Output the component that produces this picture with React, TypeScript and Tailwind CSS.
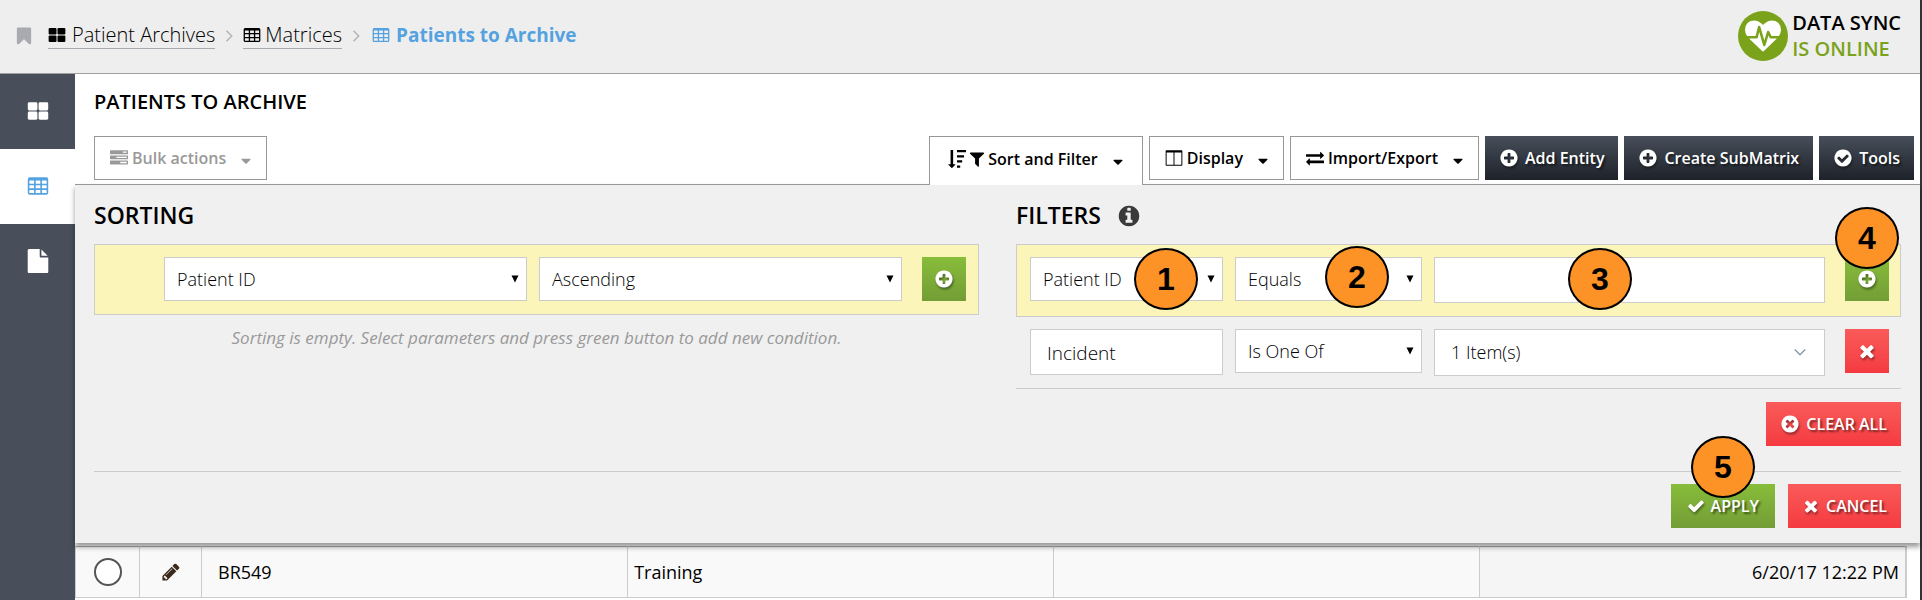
import React, { useState } from "react";

type IconProps = { className?: string };

const disc =
  "q0 209-103 385.5t-279.5 279.5-385.5 103-385.5-103-279.5-279.5-103-385.5 103-385.5 279.5-279.5 385.5-103 385.5 103 279.5 279.5 103 385.5z";

const shapes = {
  plusCircle:
    "M1344 960v-128q0-26-19-45t-45-19h-256v-256q0-26-19-45t-45-19h-128q-26 0-45 19t-19 45v256h-256q-26 0-45 19t-19 45v128q0 26 19 45t45 19h256v256q0 26 19 45t45 19h128q26 0 45-19t19-45v-256h256q26 0 45-19t19-45zm320-64" + disc,
  timesCircle:
    "M1277 1122q0-26-19-45l-181-181 181-181q19-19 19-45 0-27-19-46l-90-90q-19-19-46-19-26 0-45 19l-181 181-181-181q-19-19-45-19-27 0-46 19l-90 90q-19 19-19 46 0 26 19 45l181 181-181 181q-19 19-19 45 0 27 19 46l90 90q19 19 46 19 26 0 45-19l181-181 181 181q19 19 45 19 27 0 46-19l90-90q19-19 19-46zm387-226" + disc,
  checkCircle:
    "M1412 734q0-28-18-46l-91-90q-19-19-45-19t-45 19l-408 407-226-226q-19-19-45-19t-45 19l-91 90q-18 18-18 46 0 27 18 45l362 362q19 19 45 19 27 0 46-19l543-543q18-18 18-45zm252 162" + disc,
  infoCircle:
    "M1152 1376v-160q0-14-9-23t-23-9h-96v-512q0-14-9-23t-23-9h-320q-14 0-23 9t-9 23v160q0 14 9 23t23 9h96v320h-96q-14 0-23 9t-9 23v160q0 14 9 23t23 9h448q14 0 23-9t9-23zm-128-896v-160q0-14-9-23t-23-9h-192q-14 0-23 9t-9 23v160q0 14 9 23t23 9h192q14 0 23-9t9-23zm640 416" + disc,
  heartbeat:
    "M1280 1024h305q-5 6-10 10.5t-9 7.5l-3 4-623 600q-18 18-44 18t-44-18l-624-602q-5-2-21-20h369q22 0 39.5-13.5t22.5-34.5l70-281 190 667q6 20 23 33t39 13q21 0 38-13t23-33l146-485 56 112q18 35 57 35zm512-428q0 145-103 300h-369l-111-221q-8-17-25.5-27t-36.5-8q-45 5-56 46l-129 430-196-686q-6-20-23.5-33t-39.5-13-39 13.5-22 34.5l-116 464h-423q-103-155-103-300 0-220 127-344t351-124q62 0 126.5 21.5t120 58 95.5 68.5 76 68q36-36 76-68t95.5-68.5 120-58 126.5-21.5q224 0 351 124t127 344z",
  times:
    "M1490 1322q0 40-28 68l-136 136q-28 28-68 28t-68-28l-294-294-294 294q-28 28-68 28t-68-28l-136-136q-28-28-28-68t28-68l294-294-294-294q-28-28-28-68t28-68l136-136q28-28 68-28t68 28l294 294 294-294q28-28 68-28t68 28l136 136q28 28 28 68t-28 68l-294 294 294 294q28 28 28 68z",
  check:
    "M1671 566q0 40-28 68l-724 724-136 136q-28 28-68 28t-68-28l-136-136-362-362q-28-28-28-68t28-68l136-136q28-28 68-28t68 28l294 295 656-657q28-28 68-28t68 28l136 136q28 28 28 68z",
  bookmark:
    "M1420 128q23 0 44 9 33 13 52.5 41t19.5 62v1289q0 34-19.5 62t-52.5 41q-19 8-44 8-48 0-83-32l-441-424-441 424q-36 33-83 33-23 0-44-9-33-13-52.5-41t-19.5-62v-1289q0-34 19.5-62t52.5-41q21-9 44-9h1048z",
  filter:
    "M1595 295q17 41-14 70l-493 493v742q0 42-39 59-13 5-25 5-27 0-45-19l-256-256q-19-19-19-45v-486l-493-493q-31-29-14-70 17-39 59-39h1280q42 0 59 39z",
  sort:
    "M736 1440q0 12-10 24l-319 319q-10 9-23 9-12 0-23-9l-320-320q-15-16-7-35 8-20 30-20h192v-1376q0-14 9-23t23-9h192q14 0 23 9t9 23v1376h192q14 0 23 9t9 23zM896 0h896v224h-896zM896 512h704v224h-704zM896 1024h512v224h-512zM896 1536h320v224h-320z",
  exchange:
    "M1792 1184v192q0 13-9.5 22.5t-22.5 9.5h-1376v192q0 13-9.5 22.5t-22.5 9.5q-12 0-24-10l-319-320q-9-9-9-22 0-14 9-23l320-320q9-9 23-9 13 0 22.5 9.5t9.5 22.5v192h1376q13 0 22.5 9.5t9.5 22.5zm0-544q0 14-9 23l-320 320q-9 9-23 9-13 0-22.5-9.5t-9.5-22.5v-192h-1376q-13 0-22.5-9.5t-9.5-22.5v-192q0-13 9.5-22.5t22.5-9.5h1376v-192q0-14 9-23t23-9q12 0 24 10l319 319q9 9 9 23z",
  pencil:
    "M491 1536l91-91-235-235-91 91v107h128v128h107zm523-928q0-22-22-22-10 0-17 7l-542 542q-7 7-7 17 0 22 22 22 10 0 17-7l542-542q7-7 7-17zm-54-192l416 416-832 832h-416v-416zm683 96q0 53-37 90l-166 166-416-416 166-165q36-38 90-38 53 0 91 38l235 234q37 39 37 91z",
  file:
    "M1152 512v-472q22 14 36 28l408 408q14 14 28 36h-472zm-128 32q0 40 28 68t68 28h544v1056q0 40-28 68t-68 28h-1344q-40 0-68-28t-28-68v-1600q0-40 28-68t68-28h800v544z",
  tasks:
    "M1024 1408h640v-128h-640v128zm-384-512h1024v-128h-1024v128zm640-512h384v-128h-384v128zm512 832v256q0 26-19 45t-45 19h-1664q-26 0-45-19t-19-45v-256q0-26 19-45t45-19h1664q26 0 45 19t19 45zm0-512v256q0 26-19 45t-45 19h-1664q-26 0-45-19t-19-45v-256q0-26 19-45t45-19h1664q26 0 45 19t19 45zm0-512v256q0 26-19 45t-45 19h-1664q-26 0-45-19t-19-45v-256q0-26 19-45t45-19h1664q26 0 45 19t19 45z",
  columns:
    "M160 1568h688v-1216h-688zM944 1568h688v-1216h-688zM1728 208v1376q0 80-80 80h-1504q-80 0-80-80v-1376q0-80 80-80h1504q80 0 80 80z",
  caret:
    "M1408 704q0 26-19 45l-448 448q-19 19-45 19t-45-19l-448-448q-19-19-19-45t19-45 45-19h896q26 0 45 19t19 45z",
};

function Icon({ name, className = "size-5" }: IconProps & { name: keyof typeof shapes }) {
  return (
    <svg
      viewBox="0 0 1792 1792"
      fill="currentColor"
      fillRule={name === "columns" ? "evenodd" : "nonzero"}
      aria-hidden="true"
      className={`shrink-0 ${className}`}
    >
      <path d={shapes[name]} />
    </svg>
  );
}

function GridIcon({ className = "size-5" }: IconProps) {
  return (
    <svg viewBox="0 -64 1792 1792" fill="currentColor" aria-hidden="true" className={`shrink-0 ${className}`}>
      {[64, 944].map((x) =>
        [128, 880].map((y) => <rect key={`${x}-${y}`} x={x} y={y} width="784" height="656" rx="110" />),
      )}
    </svg>
  );
}

function TableIcon({ className = "size-5" }: IconProps) {
  const cell = (x: number, y: number) =>
    `M${x + 32} ${y}h320q32 0 32 32v192q0 32-32 32h-320q-32 0-32-32v-192q0-32 32-32z`;
  const cells = [192, 704, 1216].flatMap((x) => [384, 768, 1152].map((y) => cell(x, y))).join("");
  return (
    <svg viewBox="0 -64 1792 1792" fill="currentColor" fillRule="evenodd" aria-hidden="true" className={`shrink-0 ${className}`}>
      <path d={`M224 128h1344q160 0 160 160v1088q0 160-160 160h-1344q-160 0-160-160v-1088q0-160 160-160z${cells}`} />
    </svg>
  );
}

function Chevron({ className = "" }: IconProps) {
  return (
    <svg viewBox="0 0 12 12" fill="none" stroke="currentColor" strokeWidth="1.5" aria-hidden="true" className={`size-3 shrink-0 ${className}`}>
      <path d="M3.5 0.8 8.7 6 3.5 11.2" />
    </svg>
  );
}

function Select({ label, value, options, className = "" }: { label: string; value: string; options: string[]; className?: string }) {
  const [current, setCurrent] = useState(value);
  return (
    <div className={`relative min-w-0 ${className}`}>
      <select
        aria-label={label}
        value={current}
        onChange={(e) => setCurrent(e.target.value)}
        className="block h-11 w-full appearance-none border border-[#ccc] bg-white pr-8 pl-3 text-lg font-light text-black"
      >
        {options.map((o) => (
          <option key={o}>{o}</option>
        ))}
      </select>
      <svg viewBox="0 0 8 8" aria-hidden="true" className="pointer-events-none absolute top-[18px] right-2 size-2">
        <path d="M0.5 0.5h7L4 7.5z" />
      </svg>
    </div>
  );
}

function Marker({ n, className }: { n: number; className: string }) {
  return (
    <span
      className={`pointer-events-none absolute z-20 flex h-[62px] w-16 items-center justify-center rounded-[50%] border-2 border-black bg-[#fd9226] font-['Liberation_Sans',sans-serif] text-[32px] leading-none font-bold text-black ${className}`}
    >
      {n}
    </span>
  );
}

const outline = "flex items-center border border-[#979797] bg-white text-base font-semibold";
const menu = `${outline} h-11 gap-1 pr-3 pl-[15px]`;
const shadowed = "flex h-11 items-center justify-center gap-1.5 text-base font-semibold text-white [&>span]:[text-shadow:2px_2px_2px_rgba(0,0,0,0.5)] [&>svg]:drop-shadow-[1px_2px_1px_rgba(0,0,0,0.4)]";
const dark = `${shadowed} bg-linear-to-b from-[#474f5a] to-[#1e222a] px-3.5`;
const green = `${shadowed} bg-linear-to-b from-[#88bd3a] to-[#739d36]`;
const red = `${shadowed} bg-linear-to-b from-[#fa5a5a] to-[#f43a40]`;

function Header() {
  return (
    <header className="flex h-[74px] items-center justify-between border-b border-[#a0a0a0] bg-[#eee] pr-[19px] pb-0.5 pl-3.5">
      <nav aria-label="Breadcrumb" className="flex items-center text-[20px] leading-[26px] font-light text-black">
        <button aria-label="Bookmark" className="mr-3.5 text-[#a8aaaf]">
          <Icon name="bookmark" />
        </button>
        <a href="#archives" className="flex items-center gap-1.5 border-b border-[#a8aaaf]">
          <GridIcon className="size-[18px]" />
          Patient Archives
        </a>
        <Chevron className="mx-2 text-[#b5b5b5]" />
        <a href="#matrices" className="flex items-center gap-1 border-b border-[#a8aaaf]">
          <TableIcon className="size-[18px]" />
          Matrices
        </a>
        <Chevron className="mx-2 text-[#b5b5b5]" />
        <a
          href="#patients"
          aria-current="page"
          className="ml-0.5 flex items-center gap-1.5 border-b border-transparent text-[19px] font-bold text-[#54a2df]"
        >
          <TableIcon className="size-[18px]" />
          Patients to Archive
        </a>
      </nav>
      <div className="flex items-center gap-1">
        <span className="flex size-[50px] items-center justify-center rounded-full bg-[#7aa31b] text-white">
          <Icon name="heartbeat" className="size-9" />
        </span>
        <p className="text-[20px] leading-[26px] font-semibold text-black">
          DATA SYNC
          <br />
          <span className="text-[#7aa31b]">IS ONLINE</span>
        </p>
      </div>
    </header>
  );
}

function Sidebar() {
  const item = "flex h-[75px] items-center justify-center pb-0.5";
  return (
    <nav aria-label="Sections" className="w-[75px] shrink-0 bg-[#484f5a] text-white">
      <a href="#dashboard" aria-label="Dashboard" className={item}>
        <GridIcon className="size-[22px]" />
      </a>
      <a href="#tables" aria-label="Matrices" className={`${item} bg-white text-[#54a2df]`}>
        <TableIcon className="size-[22px]" />
      </a>
      <a href="#files" aria-label="Documents" className={item}>
        <Icon name="file" className="size-6" />
      </a>
    </nav>
  );
}

function Toolbar() {
  return (
    <div className="flex items-start gap-1.5 pr-1.5 pl-[19px]">
      <button disabled className={`${menu} mr-auto text-[#999]`}>
        <Icon name="tasks" className="size-[18px]" />
        Bulk actions
        <Icon name="caret" className="mt-1.5 ml-2 size-4" />
      </button>
      <button
        aria-expanded="true"
        className={`${outline} relative z-10 -mb-px h-[49px] gap-0.5 border-b-0 pr-4 pb-1 pl-[18px] text-black`}
      >
        <Icon name="sort" className="size-[18px]" />
        <Icon name="filter" className="size-[18px]" />
        Sort and Filter
        <Icon name="caret" className="mt-1.5 ml-2.5 size-4" />
      </button>
      <button className={`${menu} text-black`}>
        <Icon name="columns" className="size-[18px]" />
        Display
        <Icon name="caret" className="mt-1.5 ml-2 size-4" />
      </button>
      <button className={`${menu} text-black`}>
        <Icon name="exchange" className="size-[18px]" />
        Import/Export
        <Icon name="caret" className="mt-1.5 ml-2 size-4" />
      </button>
      <button className={dark}>
        <Icon name="plusCircle" />
        <span>Add Entity</span>
      </button>
      <button className={dark}>
        <Icon name="plusCircle" />
        <span>Create SubMatrix</span>
      </button>
      <button className={dark}>
        <Icon name="checkCircle" />
        <span>Tools</span>
      </button>
    </div>
  );
}

const fields = ["Patient ID", "Incident"];
const heading = "pt-0.5 text-[23px] leading-[57px] font-semibold text-black";

function Sorting() {
  return (
    <section>
      <h2 className={heading}>SORTING</h2>
      <div className="flex items-start gap-3 border border-[#ccc] bg-[#fbf5b9] pt-3 pr-3 pb-[13px] pl-[69px]">
        <Select label="Sort field" value="Patient ID" options={fields} className="flex-1" />
        <Select label="Sort direction" value="Ascending" options={["Ascending", "Descending"]} className="flex-1" />
        <button aria-label="Add sorting" className={`${green} ml-2 w-11 shrink-0`}>
          <Icon name="plusCircle" />
        </button>
      </div>
      <p className="mt-[9px] text-center text-[17px] leading-7 text-[#999] italic">
        Sorting is empty. Select parameters and press green button to add new condition.
      </p>
    </section>
  );
}

function Filters() {
  const [query, setQuery] = useState("");
  const row = "grid grid-cols-[193fr_187fr_391fr_52px] items-start gap-3 border pr-[11px] pl-[13px]";
  return (
    <section>
      <h2 className={`${heading} flex items-center gap-4`}>
        FILTERS
        <button aria-label="About filters" className="text-[#3a3a3a]">
          <Icon name="infoCircle" className="size-6" />
        </button>
      </h2>
      <div className={`${row} border-[#ccc] bg-[#fbf5b9] pt-3 pb-[13px]`}>
        <div className="relative">
          <Select label="Filter field" value="Patient ID" options={fields} />
          <Marker n={1} className="-top-[9px] right-[25px]" />
        </div>
        <div className="relative">
          <Select label="Filter operator" value="Equals" options={["Equals", "Is One Of"]} />
          <Marker n={2} className="-top-[11px] right-[33px]" />
        </div>
        <div className="relative">
          <input
            aria-label="Filter value"
            value={query}
            onChange={(e) => setQuery(e.target.value)}
            className="block h-[46px] w-full border border-[#ccc] bg-white px-4 text-lg font-light"
          />
          <Marker n={3} className="-top-[9px] left-[134px]" />
        </div>
        <div className="relative">
          <button aria-label="Add filter" className={`${green} ml-auto w-11`}>
            <Icon name="plusCircle" />
          </button>
          <Marker n={4} className="-top-[50px] -right-2.5" />
        </div>
      </div>
      <div className={`${row} border-transparent pt-[11px] pb-[11px]`}>
        <input
          aria-label="Condition field"
          readOnly
          value="Incident"
          className="block h-[46px] w-full min-w-0 border border-[#ccc] bg-white px-4 pt-0.5 text-[19px] font-light text-black"
        />
        <Select label="Condition operator" value="Is One Of" options={["Is One Of", "Equals"]} />
        <button
          aria-haspopup="listbox"
          className="flex h-[47px] items-center justify-between border border-[#ccc] bg-white pr-[18px] pb-0.5 pl-4 text-lg font-light text-black"
        >
          1 Item(s)
          <Chevron className="rotate-90 text-[#8e99a8]" />
        </button>
        <button aria-label="Remove condition" className={`${red} ml-auto w-11`}>
          <Icon name="times" />
        </button>
      </div>
      <div className="flex justify-end border-t border-[#ccc] pt-[13px] pb-[25px]">
        <button className={`${red} px-3.5`}>
          <Icon name="timesCircle" />
          <span>CLEAR ALL</span>
        </button>
      </div>
    </section>
  );
}

function Records() {
  const cell = "border-r border-[#ccc] p-0 font-normal";
  return (
    <div className="flex flex-1 flex-col pt-[3px] pr-[13px]">
      <table className="h-[52px] w-full table-fixed border-collapse border-y border-l border-[#ccc] border-t-[#aaa] bg-[#f9f9f9] text-lg leading-6 text-black">
        <colgroup>
          <col className="w-16" />
          <col className="w-[62px]" />
          <col />
          <col />
          <col />
          <col />
        </colgroup>
        <tbody>
          <tr>
            <td className={cell}>
              <input type="radio" aria-label="Select BR549" className="mx-auto block size-7 appearance-none rounded-full border-2 border-[#555] bg-white" />
            </td>
            <td className={cell}>
              <button aria-label="Edit BR549" className="mx-auto block text-[#3b2a1c]">
                <Icon name="pencil" />
              </button>
            </td>
            <td className={`${cell} pl-4`}>BR549</td>
            <td className={`${cell} pl-1.5`}>Training</td>
            <td className={cell}></td>
            <td className="border-r-2 border-[#ccc] bg-[#f5f5f5] py-0 pr-1.5 text-right">6/20/17 12:22 PM</td>
          </tr>
        </tbody>
      </table>
    </div>
  );
}

export default function App() {
  return (
    <div className="flex min-h-screen flex-col border-r-2 border-[#333] bg-white font-['Open_Sans','Noto_Sans',sans-serif]">
      <Header />
      <div className="flex flex-1">
        <Sidebar />
        <main className="flex min-w-0 flex-1 flex-col">
          <h1 className="pt-3 pb-[18px] pl-[19px] text-[20px] leading-8 font-semibold text-black">PATIENTS TO ARCHIVE</h1>
          <Toolbar />
          <div className="relative border-t border-[#979797] bg-[#f0f0f0] pr-[19px] pb-[15px] pl-[19px] shadow-[0_4px_5px_rgba(0,0,0,0.4)]">
            <div className="grid grid-cols-2 gap-x-[37px]">
              <Sorting />
              <Filters />
            </div>
            <div className="flex justify-end gap-[13px] border-t border-[#ccc] pt-3">
              <div className="relative">
                <button className={`${green} px-4`}>
                  <Icon name="check" className="size-[18px]" />
                  <span>APPLY</span>
                </button>
                <Marker n={5} className="-top-12 right-5" />
              </div>
              <button className={`${red} px-3.5`}>
                <Icon name="times" className="size-[18px]" />
                <span>CANCEL</span>
              </button>
            </div>
          </div>
          <Records />
        </main>
      </div>
    </div>
  );
}
